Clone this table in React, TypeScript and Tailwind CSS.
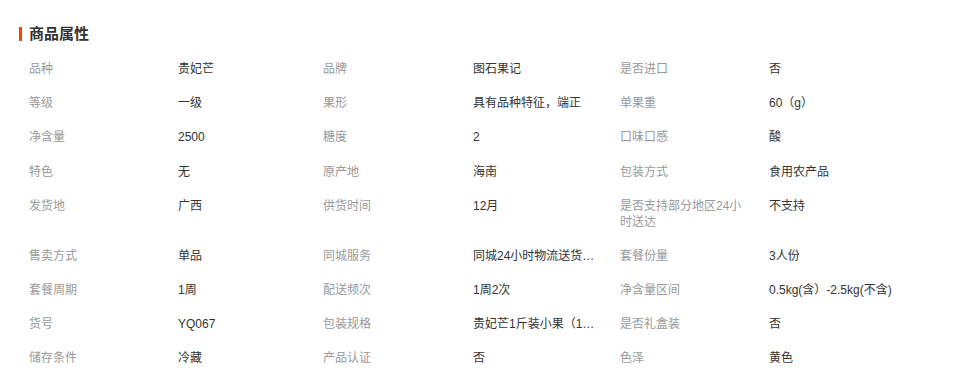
const rows: [string, string][][] = [
  [["品种", "贵妃芒"], ["品牌", "图石果记"], ["是否进口", "否"]],
  [["等级", "一级"], ["果形", "具有品种特征，端正"], ["单果重", "60（g）"]],
  [["净含量", "2500"], ["糖度", "2"], ["口味口感", "酸"]],
  [["特色", "无"], ["原产地", "海南"], ["包装方式", "食用农产品"]],
  [["发货地", "广西"], ["供货时间", "12月"], ["是否支持部分地区24小时送达", "不支持"]],
  [["售卖方式", "单品"], ["同城服务", "同城24小时物流送货上门"], ["套餐份量", "3人份"]],
  [["套餐周期", "1周"], ["配送频次", "1周2次"], ["净含量区间", "0.5kg(含）-2.5kg(不含)"]],
  [["货号", "YQ067"], ["包装规格", "贵妃芒1斤装小果（100-150g）"], ["是否礼盒装", "否"]],
  [["储存条件", "冷藏"], ["产品认证", "否"], ["色泽", "黄色"]],
];

const colW = ["w-[149px]", "w-[145px]", "w-[150px]", "w-[147px]", "w-[149px]", "w-[160px]"];

export default function App() {
  return (
    <div
      className="w-[959px] h-[380px] bg-white overflow-hidden text-[12px] leading-[16px]"
      style={{ fontFamily: '"Liberation Sans", "Noto Sans CJK SC", sans-serif' }}
    >
      <div className="flex items-center h-[20px] mt-[24px] pl-[19px]">
        <div className="w-[3px] h-[14px] bg-[#ff4400]" />
        <h2 className="ml-[7px] text-[15px] font-bold text-[#333]">商品属性</h2>
      </div>
      <div className="mt-[8px] pl-[29px]">
        {rows.map((row, i) => (
          <div key={i} className={i === 2 ? "flex pb-[1px]" : "flex"}>
            {row.map(([label, value], j) => (
              <div key={j} className="flex">
                <div className={`${colW[j * 2]} py-[9px]`}>
                  <div className="max-w-[125px] text-[#999]">{label}</div>
                </div>
                <div className={`${colW[j * 2 + 1]} py-[9px]`}>
                  <div className="max-w-[125px] text-[#333] whitespace-nowrap overflow-hidden text-ellipsis">
                    {value}
                  </div>
                </div>
              </div>
            ))}
          </div>
        ))}
      </div>
    </div>
  );
}
